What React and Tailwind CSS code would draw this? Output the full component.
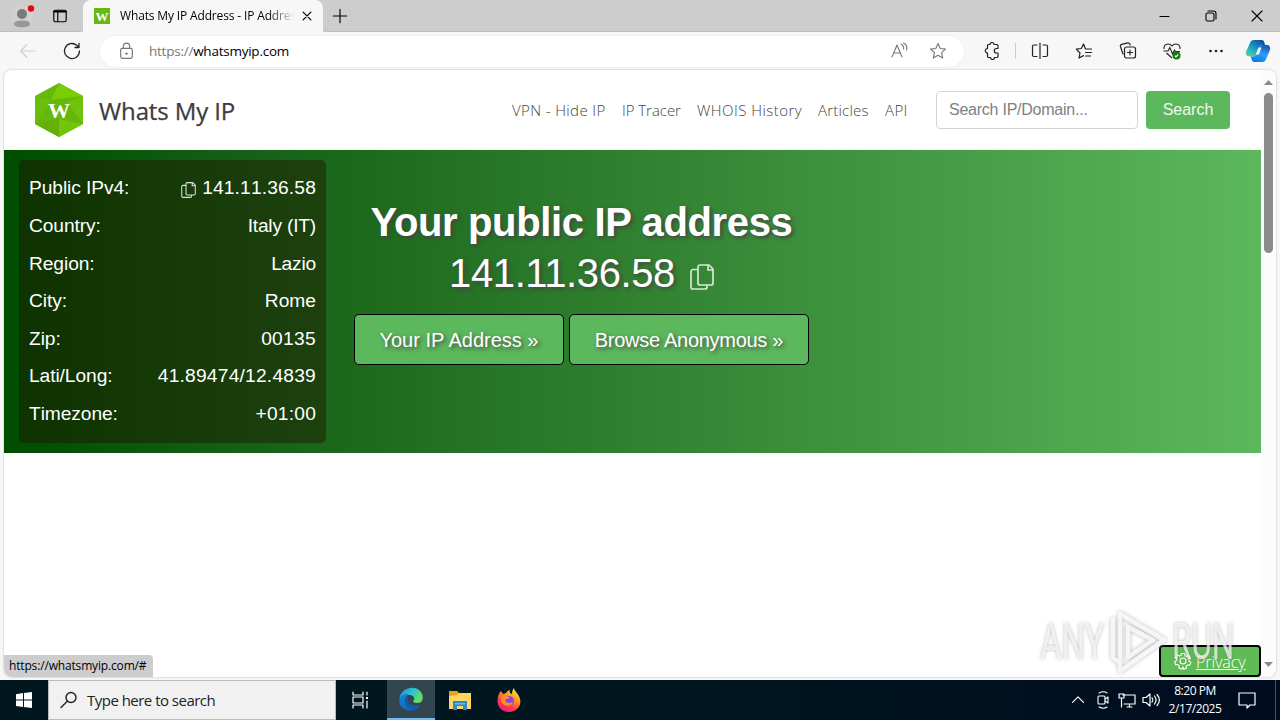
import React from 'react';

// --- Data ---
const navLinks = [
    { label: 'VPN - Hide IP', style: 'w-[94px] tracking-[0.38px]' },
    { label: 'IP Tracer', style: 'w-[59px] tracking-[-0.05px]' },
    { label: 'WHOIS History', style: 'w-[105px] tracking-[0.45px]' },
    { label: 'Articles', style: 'w-[51px] tracking-[0.2px]' },
    { label: 'API', style: 'w-[23px] tracking-[0.4px]' }
];

const ipDetails = [
    { label: 'Public IPv4:', value: '141.11.36.58', style: 'tracking-[0.15px]', copy: true },
    { label: 'Country:', value: 'Italy (IT)', style: 'tracking-[-0.2px]' },
    { label: 'Region:', value: 'Lazio', style: 'tracking-[-0.2px]' },
    { label: 'City:', value: 'Rome', style: '' },
    { label: 'Zip:', value: '00135', style: 'tracking-[0.3px]' },
    { label: 'Lati/Long:', value: '41.89474/12.4839', style: 'tracking-[0.22px]' },
    { label: 'Timezone:', value: '+01:00', style: 'tracking-[0.2px]' }
];

const Icon = ({ size = 18, className = '', strokeWidth = 1.1, children }) => (
    <svg width={size} height={size} viewBox="0 0 18 18" fill="none" stroke="currentColor" strokeWidth={strokeWidth} strokeLinecap="round" strokeLinejoin="round" className={`shrink-0 ${className}`}>
        {children}
    </svg>
);

const CopyIcon = ({ className }) => (
    <svg viewBox="0 0 24 26" fill="none" stroke="currentColor" strokeWidth="1.7" strokeLinejoin="round" className={className}>
        <path d="M8 3a2 2 0 0 1 2-2h9l4 4v14a2 2 0 0 1-2 2H10a2 2 0 0 1-2-2z" />
        <path d="M18 1v5h5M8 5.500H3a2 2 0 0 0-2 2V23a2 2 0 0 0 2 2h12a2 2 0 0 0 2-2v-2" />
    </svg>
);

// --- Browser chrome ---
const TabStrip = () => (
    <div className="flex h-8 bg-[#cdcdcd] text-black">
        <div className="flex w-[83px] items-center rounded-br-md border-b border-[#bdbdbd] pl-[10px]">
            <svg width="26" height="28" viewBox="0 0 26 28" className="shrink-0">
                <circle cx="12" cy="15" r="11" fill="#d3d1cf" />
                <circle cx="12" cy="12" r="5" fill="#7b7b7b" />
                <path d="M4 22.500c0-3 2-4 8-4s8 1 8 4c-1 2-4 2.800-8 2.800s-7-.8-8-2.800z" fill="#989898" />
                <circle cx="21" cy="6.500" r="3.200" fill="#e30613" />
            </svg>
            <Icon size={16} strokeWidth={1.300} className="ml-4">
                <rect x="2" y="2.500" width="14" height="13" rx="2" />
                <path d="M2.500 4h13" strokeWidth="2.200" />
                <path d="M6.500 5v10" />
            </Icon>
        </div>
        <div className="flex w-[240px] items-center rounded-t-lg bg-[#f7f7f7] pl-[11px]">
            <div className="flex h-4 w-4 shrink-0 items-center justify-center bg-[#69b817] font-['Liberation_Serif',serif] text-[13px] leading-none font-bold text-white">W</div>
            <span className="ml-[10px] w-[174px] overflow-hidden bg-linear-to-r from-black from-85% to-transparent bg-clip-text text-[12px] tracking-[-0.15px] whitespace-nowrap text-transparent">
                Whats My IP Address - IP Address
            </span>
            <Icon size={14} strokeWidth={1.600} className="ml-[6px]">
                <path d="M4 4l10 10M14 4L4 14" />
            </Icon>
        </div>
        <div className="flex flex-1 items-center rounded-bl-md border-b border-[#bdbdbd] pl-[9px]">
            <Icon size={16} strokeWidth={1.300}>
                <path d="M9 1.500v15M1.500 9h15" />
            </Icon>
            <div className="ml-auto flex items-center gap-[28px] pr-[14px]">
                <Icon><path d="M4 9.500h9" /></Icon>
                <Icon>
                    <rect x="4" y="6" width="8" height="8" rx="1.500" />
                    <path d="M6 4h5.500A2.500 2.500 0 0 1 14 6.500V12" />
                </Icon>
                <Icon><path d="M4 4l10 10M14 4L4 14" /></Icon>
            </div>
        </div>
    </div>
);

const CopilotLogo = () => (
    <svg width="26" height="26" viewBox="0 0 26 26" className="shrink-0">
        <defs>
            <linearGradient id="copilotA" x1="0" y1="1" x2=".8" y2="0">
                <stop offset="0" stopColor="#6bdc82" />
                <stop offset=".45" stopColor="#18a9c9" />
                <stop offset="1" stopColor="#114b9c" />
            </linearGradient>
            <linearGradient id="copilotB" x1=".7" y1="0" x2=".3" y2="1">
                <stop offset="0" stopColor="#1456b8" />
                <stop offset=".5" stopColor="#2e9dfa" />
                <stop offset="1" stopColor="#087bea" />
            </linearGradient>
        </defs>
        <path d="M9 2h7.500c2 0 2.500 1 3 3l.7 2H18c-2.500 0-3.500 1.200-4 3l-2 5.500c-.6 2-1.800 3-3.500 3H4.500c-3 0-4.300-2-3.300-5.200L4.500 6C5.300 3.500 6.700 2 9 2z" fill="url(#copilotA)" />
        <path d="M17 24H9.500c-2 0-2.500-1-3-3l-.7-2.500H8c2.500 0 3.500-1.200 4-3l2-5.500c.6-2 1.800-3 3.500-3h4c3 0 4.300 2 3.300 5.200L21.500 20c-.8 2.500-2.200 4-4.500 4z" fill="url(#copilotB)" />
        <path d="M13.500 9.500h3l-2.600 7h-3.200z" fill="#eef8ff" />
    </svg>
);

const Toolbar = () => (
    <div className="flex h-[38px] items-center bg-[#f7f7f7] text-[#222]">
        <Icon className="ml-[19px] text-[#cfcfcf]"><path d="M1.500 9H16M8 2.500L1.500 9 8 15.500" /></Icon>
        <Icon className="ml-[26px]" strokeWidth={1.300}>
            <path d="M16.500 9A7.500 7.500 0 1 1 13.700 3.200L16 5.500M16 1.500v4h-4" />
        </Icon>
        <div className="ml-[19px] flex h-[31px] w-[864px] items-center rounded-full bg-white pl-[17px] text-[#777] shadow-[0_0_2px_#e2e2e2]">
            <Icon size={19}>
                <rect x="3.500" y="6" width="11" height="9.500" rx="1.500" />
                <path d="M6 6V4a3 3 0 0 1 6 0v2" />
                <circle cx="9" cy="11" r=".6" fill="currentColor" />
            </Icon>
            <span className="ml-[13px] text-[13.500px] tracking-[-0.24px]">https://<span className="text-black">whatsmyip.com</span></span>
            <div className="ml-auto flex items-center gap-[21px] pr-[17px]">
                <Icon>
                    <path d="M2 15L7 3l5 12M3.700 11h6.600M11 2c2 1 3 3 2.500 5M13.500 1c3 1.500 4 4 3 7" />
                </Icon>
                <Icon><path d="M9 1.500l2.200 5 5.300.6-4 3.600 1.200 5.300L9 13.300 4.300 16l1.200-5.300-4-3.600 5.300-.6z" /></Icon>
            </div>
        </div>
        <Icon className="ml-[19px]" strokeWidth={1.200}>
            <path d="M5.500 2.500H7a2 2 0 0 1 4 0h3a1 1 0 0 1 1 1v3h-1.500a2 2 0 0 0 0 4.500H15v3.500a1 1 0 0 1-1 1h-2.500a2 2 0 0 1-4 0H5.500a1 1 0 0 1-1-1V11a2.200 2.200 0 0 1 0-4.500v-3a1 1 0 0 1 1-1z" />
        </Icon>
        <div className="ml-[14px] h-4 w-px bg-[#ccc]" />
        <Icon className="ml-[15px]" strokeWidth={1.200}>
            <path d="M6 3H3a1.500 1.500 0 0 0-1.500 1.500v8.500A1.500 1.500 0 0 0 3 14.500h3M12 3h3a1.500 1.500 0 0 1 1.500 1.500v8.500a1.500 1.500 0 0 1-1.500 1.500h-3M9 1v15.500" />
        </Icon>
        <Icon className="ml-[26px]" strokeWidth={1.200}>
            <path d="M16.500 7H10.500L8.500 2 6.300 6.500l-5 .7L5 11l-1 5 4.500-2.400M10.500 10.500h6M10.500 14h5" />
        </Icon>
        <Icon className="ml-[26px]" strokeWidth={1.200}>
            <rect x="5.500" y="5" width="11" height="11" rx="2" />
            <path d="M11 8v5M8.500 10.500h5M4 12L1.500 4.800a2 2 0 0 1 1.300-2.500l6-1.500a2 2 0 0 1 2 1.300l.4.900" />
        </Icon>
        <svg width="18" height="18" viewBox="0 0 18 18" fill="none" stroke="currentColor" strokeWidth="1.100" className="ml-[26px] shrink-0">
            <path d="M1 7C.5 2 6 .5 9 4c3-3.500 8.500-2 8 3M.5 9H5l1.800-3.500L9.500 12l2-4 1 1.500H17M3.500 11L9 16" />
            <circle cx="13.500" cy="13.500" r="4" fill="#107c10" stroke="none" />
            <path d="M11.800 13.700l1.200 1.200 2.300-2.400" stroke="#fff" />
        </svg>
        <Icon className="ml-[26px]">
            <g fill="currentColor" stroke="none">
                <circle cx="3.500" cy="9" r="1.300" />
                <circle cx="9" cy="9" r="1.300" />
                <circle cx="14.500" cy="9" r="1.300" />
            </g>
        </Icon>
        <div className="ml-5"><CopilotLogo /></div>
    </div>
);

// --- Page ---
const SiteLogo = () => (
    <svg width="48" height="54" viewBox="0 0 48 54" className="shrink-0">
        <path d="M24 0l24 13v28L24 54 0 41V13z" fill="#66b80a" />
        <path d="M24 0l24 13-32 4z" fill="#79cc06" />
        <path d="M48 13v28L32 20z" fill="#70c20a" />
        <path d="M0 13l16 4L0 41z" fill="#6cbf0a" />
        <path d="M0 41l24-5v18z" fill="#62b008" />
        <path d="M48 41l-24-5 8-16z" fill="#67b60c" />
        <path d="M24 36v18l24-13z" fill="#73c50c" />
        <text x="24" y="35" textAnchor="middle" fill="#fff" fontFamily="Liberation Serif, serif" fontWeight="700" fontSize="22">W</text>
    </svg>
);

const SiteHeader = () => (
    <header className="flex h-20 items-center border-b border-[#ecffe8] bg-white pl-[31px]">
        <SiteLogo />
        <span className="mt-[2px] ml-[16px] text-[24px] font-medium tracking-[-0.12px] whitespace-nowrap text-[#3c3c3c] [-webkit-text-stroke:0.25px_#3c3c3c]">Whats My IP</span>
        <nav className="mt-[2px] ml-auto flex gap-4 text-[15px] font-light text-[#444]">
            {navLinks.map((link) => (
                <a key={link.label} className={`whitespace-nowrap ${link.style}`}>{link.label}</a>
            ))}
        </nav>
        <div className="mr-[31px] ml-[28px] flex gap-2 font-['Liberation_Sans',sans-serif] text-[16px]">
            <div className="flex h-[38px] w-[202px] items-center rounded-[4px] border border-[#ced4da] pl-3 tracking-[-0.24px] text-[#7b8188]">Search IP/Domain...</div>
            <button className="h-[38px] w-[84px] rounded-[4px] bg-[#5cb85c] text-white/90">Search</button>
        </div>
    </header>
);

const Hero = () => (
    <section className="flex h-[303px] items-start bg-linear-to-r from-[#004d00] to-[#5cb85c] font-['Liberation_Sans',sans-serif] text-white">
        <div className="mt-[10px] ml-[15px] h-[283px] w-[307px] rounded-[5px] bg-[rgba(31,16,0,0.44)] px-[10px] pt-[10px]">
            {ipDetails.map((row) => (
                <div key={row.label} className="flex h-[37.600px] items-center text-[19.200px] [font-kerning:none]">
                    <span className="tracking-[-0.08px]">{row.label}</span>
                    <span className={`ml-auto flex items-center ${row.style}`}>
                        {row.copy && <CopyIcon className="mt-[2px] mr-[6px] h-4 w-[15px] opacity-85" />}
                        {row.value}
                    </span>
                </div>
            ))}
        </div>
        <div className="mt-[46px] ml-[28px] flex w-[455px] flex-col items-center">
            <h1 className="text-[40px] leading-[52px] font-bold tracking-[-0.36px] whitespace-nowrap [text-shadow:2px_2px_4px_#444]">Your public IP address</h1>
            <div className="flex items-center text-[40px] leading-[50px] tracking-[-0.4px] [text-shadow:2px_2px_4px_#444]">
                141.11.36.58
                <CopyIcon className="mt-[7px] ml-[15px] h-[26px] w-6 opacity-80" />
            </div>
            <div className="mt-[16px] flex gap-[5px] text-[20px] [text-shadow:2px_2px_4px_#444]">
                <button className="h-[51px] w-[210px] rounded-[5px] border border-black bg-[#5cb85c] [text-shadow:inherit]">Your IP Address »</button>
                <button className="h-[51px] w-[240px] rounded-[5px] border border-black bg-[#5cb85c] tracking-[-0.28px] [text-shadow:inherit]">Browse Anonymous »</button>
            </div>
        </div>
    </section>
);

const ScrollBar = () => (
    <div className="flex w-[15px] flex-col items-center bg-[#fcfcfc] pt-[10px] pb-[10px]">
        <svg width="9" height="5" viewBox="0 0 9 5"><path d="M4.500 0L9 5H0z" fill="#8a8a8a" /></svg>
        <div className="mt-[8px] h-[160px] w-[9px] rounded-full bg-[#8b8b8b]" />
        <svg width="9" height="5" viewBox="0 0 9 5" className="mt-auto"><path d="M4.500 5L9 0H0z" fill="#8a8a8a" /></svg>
    </div>
);

const PrivacyButton = () => (
    <div className="absolute right-[15px] bottom-0 flex h-[32px] w-[102px] items-center rounded-[4px] border-2 border-black bg-[#5fbb55] pl-[13px] text-white">
        <svg width="18" height="18" viewBox="0 0 24 24" fill="none" stroke="currentColor" strokeWidth="1.500">
            <path d="M10 2h4l.6 3 2 1 2.800-1.500 2.500 3-2 2.400.1 2.200 2.500 1.700-1.500 3.700-3-.2-1.700 1.700.2 2.800-3.700 1.200L12 20l-1.800 2.700-3.700-1.400.3-2.800-1.700-1.700-3 .1L1 13.100l2.500-1.700.2-2.300L2 6.800l2.600-3 2.700 1.600 2-.8z" />
            <circle cx="12" cy="12" r="4" />
        </svg>
        <a className="mt-px ml-[4px] text-[16px] font-light tracking-[-0.05px] underline">Privacy</a>
    </div>
);

const Watermark = () => (
    <div className="absolute right-[42px] bottom-px flex h-[68px] w-[194px] items-center justify-between font-['Roboto',sans-serif] text-[50px] text-white/70 [text-shadow:0_0_4px_rgba(110,110,110,0.5)]">
        <span className="w-[63px] origin-left scale-x-[0.66]">ANY</span>
        <svg width="60" height="66" viewBox="0 0 60 66" fill="none" stroke="#fff" strokeOpacity=".8" strokeWidth="4.500" strokeLinejoin="round" className="shrink-0 drop-shadow-[0_0_2px_#aaa]">
            <path d="M5 9v40l6 4M12 50V5l44 26-44 31V50M20 18v30l25-17z" />
        </svg>
        <span className="w-[62px] origin-left scale-x-[0.63]">RUN</span>
    </div>
);

const WebPage = () => (
    <main className="relative mx-1 flex h-[607px] overflow-hidden rounded-lg bg-white shadow-[0_0_2px_#aaa]">
        <div className="flex-1">
            <SiteHeader />
            <Hero />
        </div>
        <ScrollBar />
        <PrivacyButton />
        <Watermark />
        <div className="absolute bottom-0 left-0 h-[22px] w-[149px] rounded-tr-[4px] rounded-bl-lg bg-[#cdcdcd] pl-[5px] text-[12px] leading-[22px] tracking-[-0.16px] whitespace-nowrap text-black">
            https://whatsmyip.com/#
        </div>
    </main>
);

// --- Taskbar ---
const EdgeLogo = () => (
    <svg width="24" height="24" viewBox="0 0 24 24">
        <defs>
            <linearGradient id="edgeTop" x1="0" y1="0" x2="1" y2=".5">
                <stop offset="0" stopColor="#168ddb" />
                <stop offset=".55" stopColor="#2cc3cf" />
                <stop offset="1" stopColor="#67df5c" />
            </linearGradient>
            <linearGradient id="edgeBase" x1="0" y1="0" x2="1" y2="1">
                <stop offset="0" stopColor="#1689d8" />
                <stop offset="1" stopColor="#124f9d" />
            </linearGradient>
        </defs>
        <path d="M.5 11C2 2 13-2 20 3c4 3 5 9 2 12-3 2-8 1-8-1 3-3 0-6-4-6-5 0-9 3-9.500 3z" fill="url(#edgeTop)" />
        <path d="M.3 13c1-4 5-7 9.700-6-4 2-5 8-1 12 4 3 9 2 13-1-3 5-8 7-13 5.500C3 22 0 18 .3 13z" fill="url(#edgeBase)" />
        <path d="M9 9c-4 3-4 8 0 11 5 3 10 1 13-3-6 3-13 1-13-4z" fill="#155aa5" />
    </svg>
);

const FolderLogo = () => (
    <svg width="22" height="19" viewBox="0 0 22 19">
        <path d="M0 0h8l2 2h11v5H0z" fill="#eaa315" />
        <path d="M0 5l8-1 2-2h12v16H0z" fill="#ffd666" />
        <path d="M4 10h14v9h-4v-4H8v4H4z" fill="#2c8bc9" />
        <path d="M6 12h10v1.500H6z" fill="#6fb6df" />
    </svg>
);

const FirefoxLogo = () => (
    <svg width="24" height="24" viewBox="0 0 24 24">
        <defs>
            <linearGradient id="fox" x1=".8" y1="0" x2=".2" y2="1">
                <stop offset="0" stopColor="#fff04a" />
                <stop offset=".35" stopColor="#ff9b20" />
                <stop offset=".7" stopColor="#ff384b" />
                <stop offset="1" stopColor="#e3178d" />
            </linearGradient>
        </defs>
        <path d="M4 3l2 3 3-1c1-2 3-3 4-3-1 2 0 3 2 4 0-3 1-5 2-6 0 3 5 6 6 11 2 7-4 13-11 13C5 24 0 19 .5 12 .8 8 2 5 4 3z" fill="url(#fox)" />
        <circle cx="12" cy="13" r="5" fill="#8547e3" />
        <path d="M4 8.500c4-1.500 7-.5 9 1.500-2 1-4 1-5 2 1 3 5 4 8 2-1 5-9 5-12-.5z" fill="#ff8a2a" />
    </svg>
);

const Taskbar = () => (
    <footer className="mt-[3px] flex h-10 bg-linear-to-r from-[#00171f] via-[#001720] to-[#000c20] text-white">
        <div className="flex w-12 items-center justify-center">
            <svg width="16" height="16" viewBox="0 0 16 16" fill="#fff"><path d="M0 2.200L7 1v6.500H0zM8 .9L16 0v7.500H8zM0 8.500h7V15l-7-1zM8 8.500h8V16l-8-1z" /></svg>
        </div>
        <div className="flex w-[288px] items-center border border-[#bbb] bg-[#f1f1f1] pl-[11px] text-[#222]">
            <Icon strokeWidth={1.400}>
                <circle cx="11" cy="6.500" r="5" />
                <path d="M7.300 10.200L1 16.500" />
            </Icon>
            <span className="ml-[9px] text-[15px] tracking-[-0.52px]">Type here to search</span>
        </div>
        <div className="flex w-[51px] items-center justify-center pr-[3px]">
            <Icon strokeWidth={1.200}>
                <path d="M2 1v3h10V1M2 17v-3h10v3M2 6h10v6H2zM16 1v3M16 10v7" />
                <path d="M15 6h2v2h-2z" fill="currentColor" stroke="none" />
            </Icon>
        </div>
        <div className="flex w-12 items-center justify-center border-b-2 border-[#76b9ed] bg-[#324650]"><EdgeLogo /></div>
        <div className="flex w-[50px] items-center justify-center"><FolderLogo /></div>
        <div className="flex w-[48px] items-center justify-center"><FirefoxLogo /></div>
        <div className="ml-auto flex items-center">
            <Icon size={14} strokeWidth={1.500}><path d="M2 12l7-7 7 7" /></Icon>
            <Icon className="ml-[9px]">
                <rect x="4" y="5" width="7" height="8" rx="1" />
                <path d="M11 8l3-2v6l-3-2M5 2c3-1.500 6-1.500 8 0M5 16c3 1.500 6 1.500 8 0" />
            </Icon>
            <Icon className="ml-[6px]" strokeWidth={1.200}>
                <path d="M5 4h12v9H6M9 16h5M11.500 13v3M1 3h5v4H1zM3.500 7v9" />
            </Icon>
            <Icon className="ml-[6px]" strokeWidth={1.200}>
                <path d="M1 6.500h3L8 3v12l-4-3.500H1zM10 7c1 1 1 3 0 4M12.500 5c2 2.500 2 5.500 0 8M15 3.500c3 3.500 3 7.500 0 11" />
            </Icon>
            <div className="ml-[5px] w-[60px] text-center text-[12px] leading-[18px] tracking-[-0.45px] whitespace-nowrap">
                <div>8:20 PM</div>
                <div>2/17/2025</div>
            </div>
            <Icon className="mr-[19px] ml-[13px]" strokeWidth={1.200}>
                <path d="M1 2h16v12h-5l-3 3v-3H1z" />
            </Icon>
            <div className="h-10 w-px bg-[#46515e]" />
            <div className="w-1" />
        </div>
    </footer>
);

const App = () => {
    return (
        <div className="h-[720px] w-[1280px] overflow-hidden bg-[#f7f7f7] font-['Open_Sans','Noto_Sans',sans-serif]">
            <TabStrip />
            <Toolbar />
            <WebPage />
            <Taskbar />
        </div>
    );
};

export default App;
